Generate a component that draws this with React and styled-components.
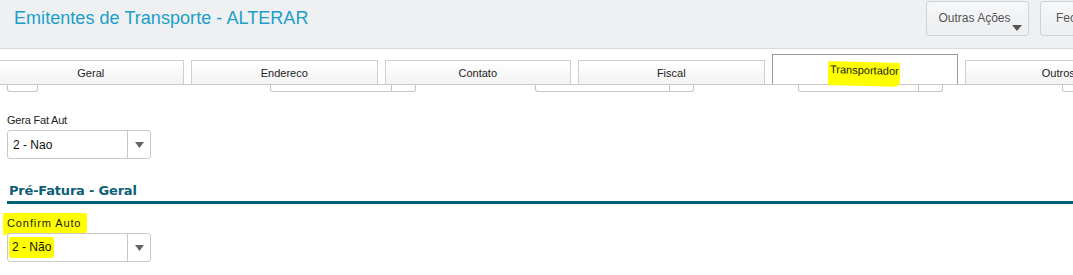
import React from 'react';
import styled, { createGlobalStyle } from 'styled-components';

const GlobalStyle = createGlobalStyle`
  html, body {
    margin: 0;
    padding: 0;
    background: #fff;
    font-family: Arial, "Liberation Sans", sans-serif;
    overflow: hidden;
  }
`;

const tabs = [
  { label: 'Geral' },
  { label: 'Endereco' },
  { label: 'Contato' },
  { label: 'Fiscal' },
  { label: 'Transportador', active: true },
  { label: 'Outros' },
];

const stubs = [
  { left: 7, width: 31, arrow: 0 },
  { left: 270, width: 146, arrow: 23 },
  { left: 535, width: 159, arrow: 23 },
  { left: 798, width: 145, arrow: 23 },
  { left: 1062, width: 40, arrow: 0 },
];

const Arrow = () => (
  <svg width="9" height="6" viewBox="0 0 9 6">
    <path d="M0 0 H9 L4.5 6 Z" fill="#666" />
  </svg>
);

const App = () => {
  return (
    <Page>
      <GlobalStyle />
      <Header>
        <Title>Emitentes de Transporte - ALTERAR</Title>
        <Actions>
          <ActionButton>
            Outras Ações
            <ButtonCaret>
              <svg width="10" height="6" viewBox="0 0 10 6">
                <path d="M0 0 H10 L5 6 Z" fill="#555" />
              </svg>
            </ButtonCaret>
          </ActionButton>
          <ActionButton $cut>Fechar</ActionButton>
        </Actions>
      </Header>

      <TabBar>
        {tabs.map(t => (
          <Tab key={t.label} $active={t.active}>
            {t.active ? <Marker $tilt>{t.label}</Marker> : t.label}
          </Tab>
        ))}
      </TabBar>

      <StubRow>
        {stubs.map((s, i) => (
          <Stub key={i} style={{ marginLeft: i === 0 ? s.left : s.left - stubs[i - 1].left - stubs[i - 1].width, width: s.width }}>
            {s.arrow > 0 && <StubDivider style={{ width: s.arrow }} />}
          </Stub>
        ))}
      </StubRow>

      <Content>
        <Field>
          <Label>Gera Fat Aut</Label>
          <Select>
            <SelectValue>2 - Nao</SelectValue>
            <SelectButton>
              <Arrow />
            </SelectButton>
          </Select>
        </Field>

        <Section>
          <SectionTitle>Pré-Fatura - Geral</SectionTitle>
        </Section>

        <Field $tight>
          <Label>
            <Marker $label>Confirm Auto</Marker>
          </Label>
          <Select>
            <SelectValue>
              <Marker $value>2 - Não</Marker>
            </SelectValue>
            <SelectButton>
              <Arrow />
            </SelectButton>
          </Select>
        </Field>
      </Content>
    </Page>
  );
};

const Page = styled.div`
  width: 1073px;
  height: 275px;
  overflow: hidden;
  background: #fff;
`;

const Header = styled.div`
  height: 48px;
  background: #eef0f2;
  border-bottom: 1px solid #d6d8da;
  display: flex;
  align-items: flex-start;
  justify-content: space-between;
`;

const Title = styled.h1`
  margin: 8px 0 0 14px;
  font-size: 18px;
  font-weight: normal;
  color: #1c9fc9;
  letter-spacing: 0.05px;
`;

const Actions = styled.div`
  display: flex;
  gap: 11px;
  margin-top: 1px;
  margin-right: -33px;
`;

const ActionButton = styled.div`
  position: relative;
  box-sizing: border-box;
  width: ${p => (p.$cut ? '66px' : '103px')};
  height: 35px;
  border: 1px solid #cfd1d3;
  border-radius: 3px;
  background: linear-gradient(#f6f7f8, #eceef0);
  font-size: 12px;
  color: #555;
  display: flex;
  justify-content: ${p => (p.$cut ? 'flex-start' : 'center')};
  padding: ${p => (p.$cut ? '0 0 0 15px' : '0 6px 0 0')};
  align-items: center;
  padding-bottom: 2px;
`;

const ButtonCaret = styled.span`
  position: absolute;
  right: 6px;
  bottom: 4px;
  line-height: 0;
`;

const TabBar = styled.div`
  margin-top: 5px;
  height: 30px;
  display: flex;
  align-items: flex-end;
  gap: 7px;
  border-bottom: 1px solid #c8c8c8;
  margin-left: -2.5px;
`;

const Tab = styled.div`
  box-sizing: border-box;
  flex: 0 0 186.5px;
  height: ${p => (p.$active ? '30px' : '24px')};
  border: 1px solid ${p => (p.$active ? '#9a9a9a' : '#cfcfcf')};
  border-bottom: none;
  background: ${p => (p.$active ? '#fff' : 'linear-gradient(#ffffff, #f3f3f3)')};
  display: flex;
  align-items: ${p => (p.$active ? 'flex-start' : 'center')};
  justify-content: center;
  padding-top: ${p => (p.$active ? '7px' : '0')};
  font-size: 11px;
  color: #222;
`;

const Marker = styled.span`
  background: #ffff00;
  ${p =>
    p.$tilt &&
    `
    position: relative;
    z-index: 1;
    padding: 2px 1px 10px 2px;
    margin-left: -1px;
    border-radius: 2px 0 6px 0;
    transform: skewY(1.5deg);
    display: inline-block;
  `}
  ${p =>
    p.$label &&
    `
    display: inline-block;
    padding: 4px 6px 5px 4px;
    margin-left: -4px;
    margin-top: -4px;
    letter-spacing: 0.9px;
    border-radius: 2px 2px 5px 2px;
  `}
  ${p =>
    p.$value &&
    `
    display: inline-block;
    padding: 3px 3px 4px 3px;
    margin-left: -4px;
    border-radius: 2px;
  `}
`;

const StubRow = styled.div`
  display: flex;
  height: 8px;
`;

const Stub = styled.div`
  box-sizing: border-box;
  flex: 0 0 auto;
  height: 7px;
  border: 1px solid #c6c6c6;
  border-top: none;
  border-radius: 0 0 3px 3px;
  display: flex;
  justify-content: flex-end;
`;

const StubDivider = styled.div`
  border-left: 1px solid #c6c6c6;
  height: 100%;
`;

const Content = styled.div`
  padding: 21px 0 0 7px;
`;

const Field = styled.div`
  display: flex;
  flex-direction: column;
  margin-top: ${p => (p.$tight ? '13px' : '0')};
`;

const Label = styled.div`
  font-size: 11px;
  color: #222;
  height: 16px;
  line-height: 13px;
  letter-spacing: -0.2px;
`;

const Select = styled.div`
  box-sizing: border-box;
  width: 144px;
  height: 29px;
  border: 1px solid #c9c9c9;
  border-radius: 3px;
  display: flex;
  background: #fff;
`;

const SelectValue = styled.div`
  flex: 1;
  display: flex;
  align-items: center;
  padding-left: 5px;
  font-size: 12px;
  color: #111;
`;

const SelectButton = styled.div`
  flex: 0 0 22px;
  border-left: 1px solid #c9c9c9;
  display: flex;
  align-items: center;
  justify-content: center;
`;

const Section = styled.div`
  margin-top: 24px;
  border-bottom: 3px solid #005e73;
  padding: 0 0 3px 2px;
`;

const SectionTitle = styled.h2`
  margin: 0;
  font-family: Verdana, "DejaVu Sans", sans-serif;
  font-size: 13px;
  font-weight: bold;
  color: #0d5f77;
  letter-spacing: -0.2px;
`;

export default App;
